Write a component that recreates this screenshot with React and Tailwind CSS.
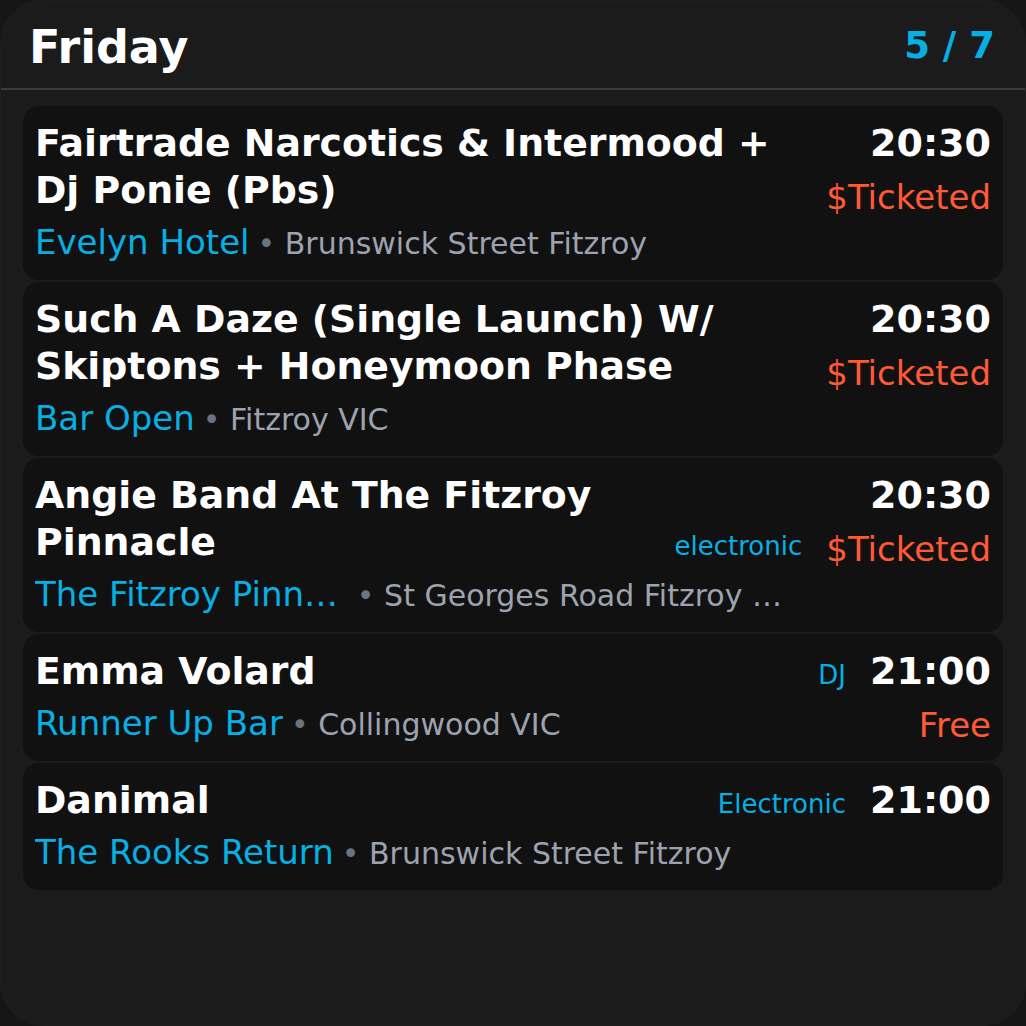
import React from "react";

const events = [
  {
    title: "Fairtrade Narcotics & Intermood + Dj Ponie (Pbs)",
    venue: "Evelyn Hotel",
    address: "Brunswick Street Fitzroy",
    time: "20:30",
    price: "$Ticketed",
  },
  {
    title: "Such A Daze (Single Launch) W/ Skiptons + Honeymoon Phase",
    venue: "Bar Open",
    address: "Fitzroy VIC",
    time: "20:30",
    price: "$Ticketed",
  },
  {
    title: "Angie Band At The Fitzroy Pinnacle",
    tag: "electronic",
    venue: "The Fitzroy Pinnacle",
    address: "St Georges Road Fitzroy North",
    time: "20:30",
    price: "$Ticketed",
  },
  {
    title: "Emma Volard",
    tag: "DJ",
    venue: "Runner Up Bar",
    address: "Collingwood VIC",
    time: "21:00",
    price: "Free",
  },
  {
    title: "Danimal",
    tag: "Electronic",
    venue: "The Rooks Return",
    address: "Brunswick Street Fitzroy",
    time: "21:00",
  },
];

function EventCard({ e }) {
  return (
    <div className="flex gap-6 rounded-2xl bg-[#111111] px-3 pt-[14px] pb-[10px]">
      <div className="flex min-w-0 flex-1 flex-col">
        <div className="flex items-end gap-3">
          <div className="min-w-0 flex-1 text-[37.8px] font-bold leading-[47px] text-white">
            {e.title}
          </div>
          {e.tag && (
            <div className="shrink-0 text-[26px] leading-[39px] text-[#06b0e4]">
              {e.tag}
            </div>
          )}
        </div>
        <div className="mt-0.5 flex min-w-0 items-baseline pr-5 leading-[53px]">
          <span className="max-w-[42%] shrink-0 truncate text-[34px] text-[#06b0e4]">
            {e.venue}
          </span>
          <span className="ml-2 min-w-0 truncate text-[30px] text-[#9ca3af]">
            <span className="text-[#6b7280]">•</span> {e.address}
          </span>
        </div>
      </div>
      <div className="flex shrink-0 flex-col items-end">
        <div className="text-[38px] font-bold leading-[47px] text-white">{e.time}</div>
        {e.price && (
          <div className="mt-2 text-[34px] leading-[1.3] text-[#ff5a36]">{e.price}</div>
        )}
      </div>
    </div>
  );
}

export default function App() {
  return (
    <div
      className="h-[1026px] w-[1026px] bg-[#161616]"
      style={{ fontFamily: "'DejaVu Sans', sans-serif" }}
    >
      <div className="flex h-full w-full flex-col overflow-hidden rounded-[44px] border border-[#1f1f1f] bg-[#1b1b1b]">
        <div className="flex h-[89px] shrink-0 items-center justify-between border-b-2 border-[#363b45] pl-[28px] pr-[30px]">
          <div className="mt-[6px] text-[46px] font-bold text-white">Friday</div>
          <div className="mt-[2px] text-[37px] font-bold text-[#06b0e4]">5 / 7</div>
        </div>
        <div className="flex flex-col gap-0.5 px-[22px] pt-4">
          {events.map((e, i) => (
            <EventCard key={i} e={e} />
          ))}
        </div>
      </div>
    </div>
  );
}
